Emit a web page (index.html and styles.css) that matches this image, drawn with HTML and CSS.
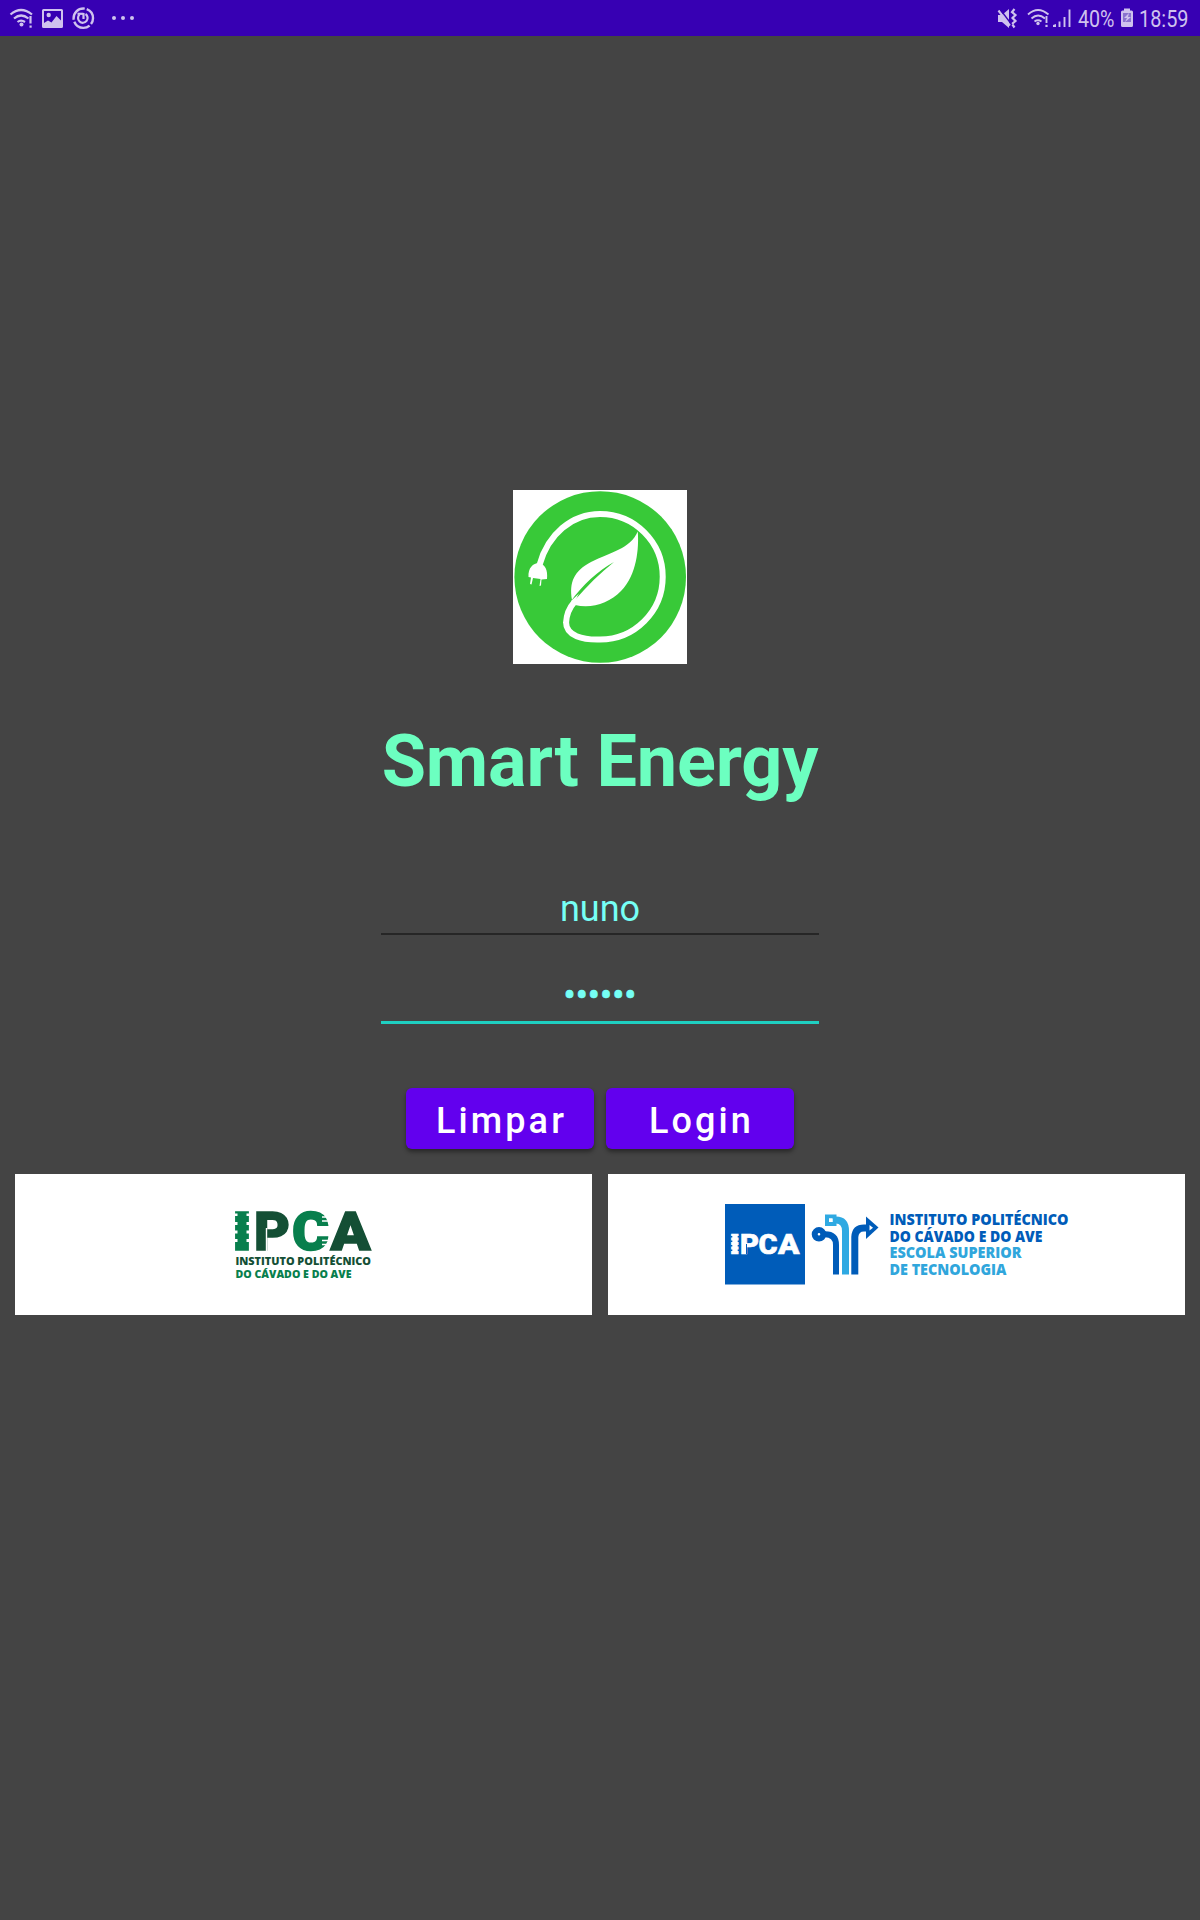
FILE: index.html
```html
<!DOCTYPE html>
<html lang="pt">
<head>
<meta charset="utf-8">
<title>Smart Energy</title>
<link rel="stylesheet" href="styles.css">
</head>
<body>
<header class="status-bar">
  <svg class="status-group" width="150" height="36" viewBox="0 0 150 36">
    <g class="line">
      <path d="M10.500 14.500Q21 5.500 32 14.500M14 18.500Q21 12.500 28.500 18.500M17.500 22Q21 19.300 25 22"/>
      <path d="M30.500 16V23.500"/>
      <circle class="ring" cx="83.300" cy="18.200" r="9.700" stroke-dasharray="18.300 2" stroke-dashoffset="12"/>
      <path d="M79.500 14.500A4.800 4.800 0 1 0 85.500 14M83.500 13V19"/>
      <path d="M77.500 13.800H83.500"/>
    </g>
    <circle cx="21.500" cy="24.500" r="2"/>
    <rect x="29.500" y="25.500" width="2.200" height="2.200"/>
    <path fill-rule="evenodd" d="M43.500 9H61.500Q63 9 63 10.500V26.500Q63 28 61.500 28H43.500Q42 28 42 26.500V10.500Q42 9 43.500 9ZM44 11V23L48 20.500 51.500 22.500 56.500 16 61 20.500V11Z"/>
    <circle cx="48.700" cy="15" r="2.200"/>
    <circle cx="114" cy="18" r="2"/><circle cx="123" cy="18" r="2"/><circle cx="132" cy="18" r="2"/>
  </svg>
  <svg class="status-group" width="220" height="36" viewBox="980 0 220 36">
    <path d="M998 15H1002L1009 9V28L1002 22H998Z"/>
    <path class="line" d="M998.500 10.500L1010 25.500"/>
    <path class="line" d="M1014.500 9L1012 12 1015.500 15 1012.500 18 1015.500 21 1012 24 1014.500 27.500"/>
    <path class="cut" d="M999.500 8.500L1012 25"/>
    <g class="line thin">
      <path d="M1028 14.500Q1038 5.500 1048.500 14.500M1031.500 18.500Q1038 12.500 1045 18.500M1034.500 21.500Q1038 19 1041.500 21.500"/>
      <path d="M1046.500 16V23"/>
      <path d="M1059.500 21.500V27M1064.500 17V27M1069.500 9.500V27"/>
    </g>
    <circle cx="1038" cy="23.500" r="1.700"/>
    <rect x="1045.400" y="24.800" width="2.200" height="2.200"/>
    <path d="M1053 27V25L1056 24V27Z"/>
    <text class="status-text" x="1078" y="27" textLength="36.500" lengthAdjust="spacingAndGlyphs">40%</text>
    <path d="M1124 8.500H1130V10.500H1131.500Q1133 10.500 1133 12V25.500Q1133 27 1131.500 27H1122.500Q1121 27 1121 25.500V12Q1121 10.500 1122.500 10.500H1124Z"/>
    <path class="bolt-field" d="M1123 13H1131V22H1123Z"/>
    <path d="M1129 13L1124 18H1127L1125 22 1131 17H1128Z"/>
    <text class="status-text" x="1139" y="27" textLength="49.500" lengthAdjust="spacingAndGlyphs">18:59</text>
  </svg>
</header>
<main class="login">
  <svg class="app-logo" width="174" height="174" viewBox="0 0 174 174">
    <circle class="green" cx="87.200" cy="87" r="85.800"/>
    <path class="cord" d="M26.500 75C35 44 59 24 87 24A62.600 62.600 0 0 1 87 149.500C70 150 53 146 53 132"/>
    <path d="M15.500 87C15 78 20 73 26 73C32 74 35 80 34 89L28.500 89.500 28 95.500 26.500 96 27.500 89 20 88 18.500 94.500 17 94 18 87.500Z"/>
    <path d="M124.800 41.500C126 58 124 85 108 101C96 113 79 119 62 115L59 110C56 92 61 81 78 72C98 62 117 59 124.800 41.500Z"/>
    <path class="green" d="M57 112.500C70 94 85 81 101 72C87 83 74 96 61 111L62 116 57 119Z"/>
    <path class="cord" d="M53 133C53.500 124 57 117 61 112.500"/>
    <path d="M58.500 110.500L66 103.500Q63.500 107 62 114L59 116Z"/>
  </svg>
  <h1 class="title">Smart Energy</h1>
  <div class="field">nuno</div>
  <div class="field password">••••••</div>
  <div class="actions">
    <button class="button">Limpar</button>
    <button class="button">Login</button>
  </div>
  <section class="partners">
    <svg class="partner" viewBox="15 1174 577 141">
      <g class="mark dark">
        <text class="light-mark" x="231.500" y="1250.300" textLength="21" lengthAdjust="spacingAndGlyphs">I</text>
        <text x="254" y="1250.300" textLength="36" lengthAdjust="spacingAndGlyphs">P</text>
        <text class="light-mark" x="292" y="1250.300" textLength="37" lengthAdjust="spacingAndGlyphs">C</text>
        <text x="330.500" y="1250.300" textLength="40" lengthAdjust="spacingAndGlyphs">A</text>
      </g>
      <path class="notch" d="M236 1213.500V1216M236 1222V1225M236 1230.500V1233.500M236 1239V1242M248 1213.500V1216M248 1222V1225M248 1230.500V1233.500M248 1239V1242"/>
      <path class="slit" d="M266.500 1228V1251M322 1217H329M322 1221H329M322 1240.500H329M322 1244.500H329"/>
      <g class="small">
        <text class="dark" x="235.500" y="1265.300" textLength="135.500" lengthAdjust="spacingAndGlyphs">INSTITUTO POLITÉCNICO</text>
        <text class="light" x="235.500" y="1277.800" textLength="116" lengthAdjust="spacingAndGlyphs">DO CÁVADO E DO AVE</text>
      </g>
    </svg>
    <svg class="partner" viewBox="608 1174 577 141">
      <rect class="blue" x="725" y="1204" width="80" height="80.500"/>
      <g class="mark mini">
        <text x="729" y="1254" textLength="11.500" lengthAdjust="spacingAndGlyphs">I</text>
        <text x="740" y="1254" textLength="19" lengthAdjust="spacingAndGlyphs">P</text>
        <text x="758.500" y="1254" textLength="19" lengthAdjust="spacingAndGlyphs">C</text>
        <text x="778" y="1254" textLength="21.500" lengthAdjust="spacingAndGlyphs">A</text>
      </g>
      <path class="notch blue-notch" d="M731.500 1236V1237.500M731.500 1240.500V1242M731.500 1245V1246.500M731.500 1249.500V1251M738.500 1236V1237.500M738.500 1240.500V1242M738.500 1245V1246.500M738.500 1249.500V1251"/>
      <path class="slit blue-slit" d="M746.500 1244V1254"/>
      <g class="pipe">
        <circle cx="819" cy="1234.300" r="4.300"/>
        <path d="M823 1234.300H825Q836 1234.300 836 1245V1274.500"/>
        <path class="sky-pipe square" d="M827 1216.500H834.500V1224H827Z"/>
        <path class="sky-pipe bold-pipe" d="M836 1220Q845.500 1220 845.500 1231V1274.500"/>
        <path class="bold-pipe" d="M854.800 1274.500V1237Q855.300 1228 864 1228H868"/>
      </g>
      <path class="blue" d="M866 1216.500L878.500 1227.500 866 1239Z"/>
      <path class="hole" d="M869.500 1225V1230.500L873 1227.700Z"/>
      <rect class="hole" x="829" y="1218.500" width="3.500" height="3.500"/>
      <g class="small wide">
        <text class="blue" x="889.500" y="1225.400" textLength="179" lengthAdjust="spacingAndGlyphs">INSTITUTO POLITÉCNICO</text>
        <text class="blue" x="889.500" y="1242" textLength="153" lengthAdjust="spacingAndGlyphs">DO CÁVADO E DO AVE</text>
        <text class="sky" x="889.500" y="1258.100" textLength="132" lengthAdjust="spacingAndGlyphs">ESCOLA SUPERIOR</text>
        <text class="sky" x="889.500" y="1274.600" textLength="117" lengthAdjust="spacingAndGlyphs">DE TECNOLOGIA</text>
      </g>
    </svg>
  </section>
</main>
</body>
</html>
```
FILE: styles.css
```css
* { box-sizing: border-box; }
body {
  margin: 0;
  min-height: 1920px;
  background: #444;
  font-family: Roboto, sans-serif;
}
svg { display: block; }
.status-bar {
  display: flex;
  justify-content: space-between;
  height: 36px;
  background: #3700b3;
}
.status-group { fill: #cfc2ee; }
.line { fill: none; stroke: #cfc2ee; stroke-width: 2.2; }
.thin { stroke-width: 1.9; }
.ring { stroke-width: 2.4; }
.cut { fill: none; stroke: #3700b3; stroke-width: 1.3; }
.bolt-field { fill: #8a72cf; }
.status-text { font-size: 23px; }
.login {
  display: flex;
  flex-direction: column;
  align-items: center;
  padding-top: 454px;
}
.app-logo { background: #fff; fill: #fff; }
.green { fill: #38c938; }
.cord { fill: none; stroke: #fff; stroke-width: 6; }
.title {
  margin: 56px 0 0;
  font-size: 72px;
  line-height: 84px;
  font-weight: 700;
  letter-spacing: -.15px;
  color: #6cffc0;
  white-space: nowrap;
}
.field {
  width: 438px;
  height: 60px;
  margin-top: 71px;
  border-bottom: 2px solid #262626;
  font-size: 36px;
  line-height: 68px;
  text-align: center;
  color: #76fff5;
}
.password {
  height: 64px;
  margin-top: 25px;
  border-bottom: 3px solid #1fcfc1;
  line-height: 73px;
  -webkit-text-stroke: .6px #76fff5;
}
.actions { display: flex; gap: 12px; margin-top: 64px; }
.button {
  width: 188px;
  height: 61px;
  padding: 5px 0 0 3px;
  border: 0;
  border-radius: 6px;
  background: #6200ee;
  box-shadow: 0 3px 4px rgba(0, 0, 0, .4);
  color: #fff;
  font: 500 36px/56px Roboto, sans-serif;
  letter-spacing: 3.1px;
}
.partners { display: flex; gap: 16px; margin-top: 25px; }
.partner { width: 577px; height: 141px; background: #fff; }
.mark { font-size: 54px; font-weight: 900; stroke-width: 1.5; }
.dark { fill: #144f35; }
.light, .light-mark { fill: #087f4d; }
.mark.dark { stroke: #144f35; }
.light-mark { stroke: #087f4d; }
.mini { font-size: 27.5px; fill: #fff; stroke: #fff; stroke-width: .6; }
.notch { fill: none; stroke: #fff; stroke-width: 3; }
.blue-notch { stroke: #005cb9; stroke-width: 1.6; }
.slit { fill: none; stroke: #fff; stroke-width: 1.4; }
.blue-slit { stroke: #005cb9; stroke-width: 1; }
.small { font: 800 10.8px "Open Sans", sans-serif; }
.wide { font-size: 15px; }
.blue { fill: #005cb9; }
.sky { fill: #30a6dc; }
.pipe { fill: none; stroke: #005cb9; stroke-width: 6; }
.sky-pipe { stroke: #2fa9e2; }
.square { stroke-width: 4; }
.bold-pipe { stroke-width: 7; }
.hole { fill: #fff; }
```
